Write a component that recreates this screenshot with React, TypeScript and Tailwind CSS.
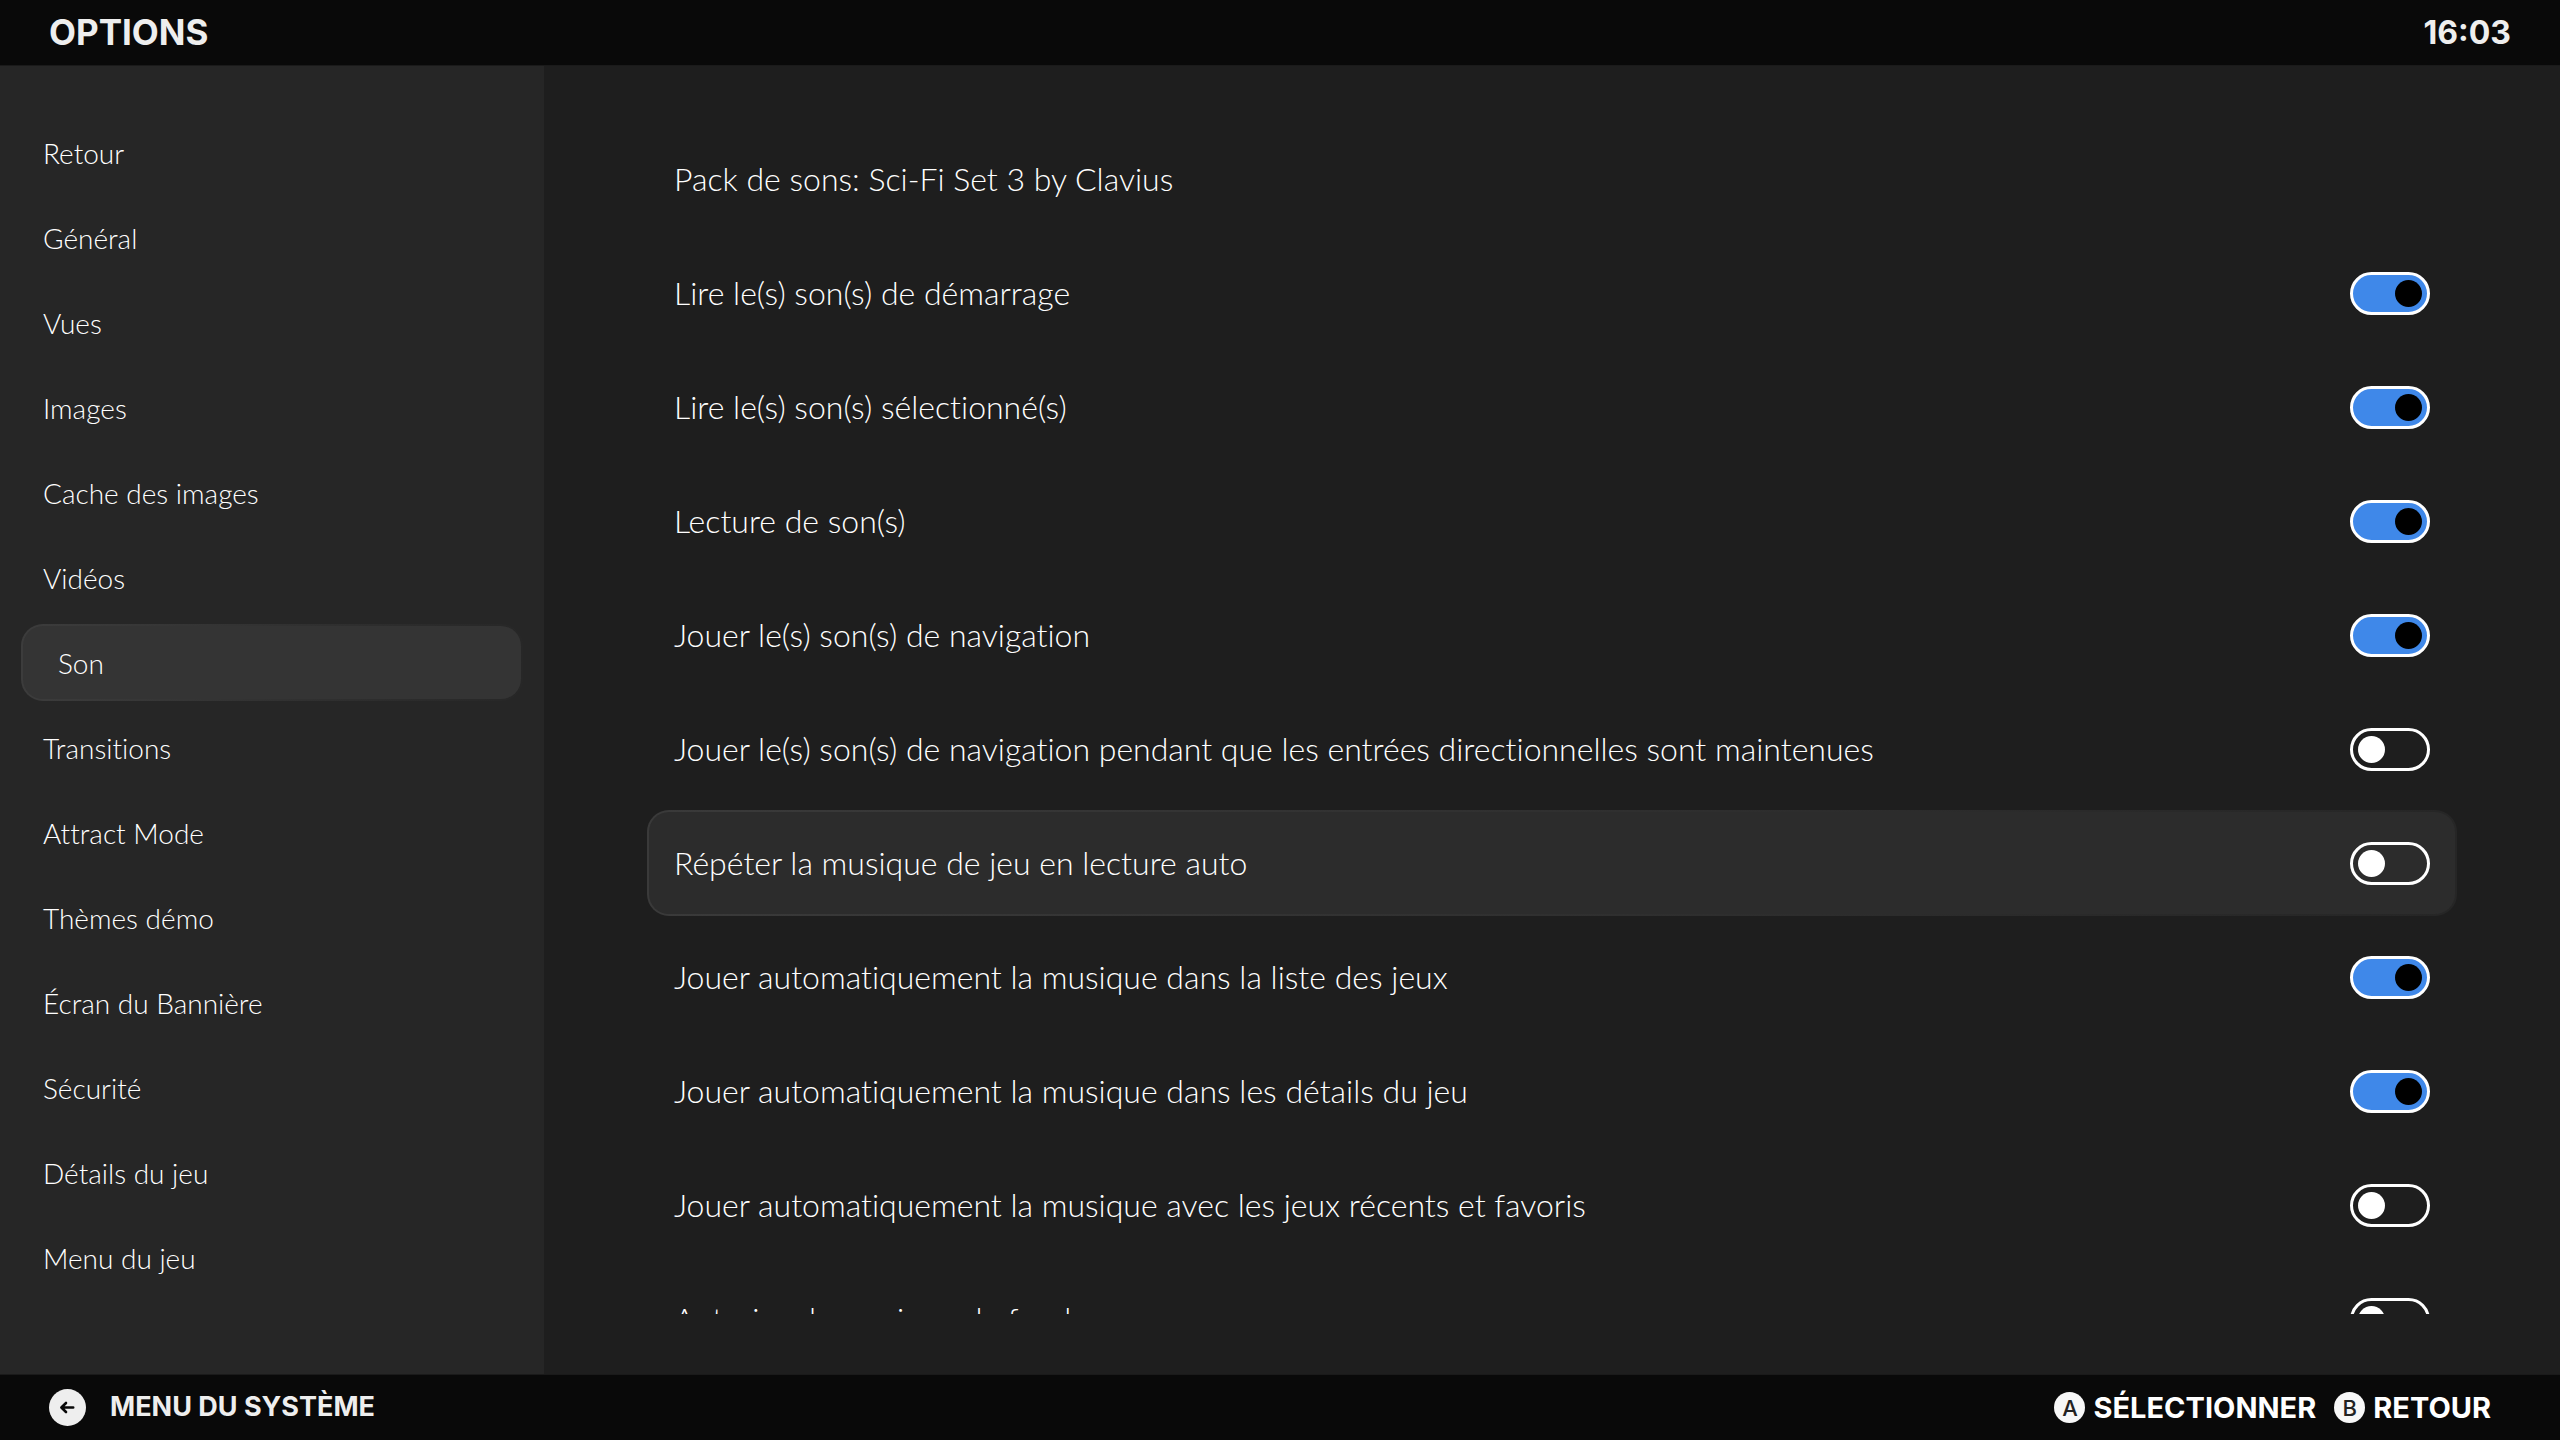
import React, { useState } from 'react';
import clsx from 'clsx';

const MENU = [
  'Retour',
  'Général',
  'Vues',
  'Images',
  'Cache des images',
  'Vidéos',
  'Son',
  'Transitions',
  'Attract Mode',
  'Thèmes démo',
  'Écran du Bannière',
  'Sécurité',
  'Détails du jeu',
  'Menu du jeu',
];

const SOUND_OPTIONS = [
  { label: 'Lire le(s) son(s) de démarrage', on: true },
  { label: 'Lire le(s) son(s) sélectionné(s)', on: true },
  { label: 'Lecture de son(s)', on: true },
  { label: 'Jouer le(s) son(s) de navigation', on: true },
  { label: 'Jouer le(s) son(s) de navigation pendant que les entrées directionnelles sont maintenues', on: false },
  { label: 'Répéter la musique de jeu en lecture auto', on: false },
  { label: 'Jouer automatiquement la musique dans la liste des jeux', on: true },
  { label: 'Jouer automatiquement la musique dans les détails du jeu', on: true },
  { label: 'Jouer automatiquement la musique avec les jeux récents et favoris', on: false },
  { label: 'Autoriser la musique de fond', on: false },
];

function Toggle({ checked, onChange }: { checked: boolean; onChange: () => void }) {
  return (
    <input
      type="checkbox"
      checked={checked}
      onChange={onChange}
      className="flex h-[43px] w-20 shrink-0 cursor-pointer appearance-none rounded-full border-3 border-white p-[5px] before:size-[27px] before:rounded-full before:bg-white checked:bg-[#3f88e9] checked:before:ml-auto checked:before:bg-black"
    />
  );
}

function Hint({ letter, text }: { letter: string; text: string }) {
  return (
    <button type="button" className="flex cursor-pointer items-center gap-2 text-[29px] font-bold text-white">
      <span className="flex size-[31px] items-center justify-center rounded-full bg-[#f7f7f7] text-[22px] leading-none font-medium text-[#222]">
        {letter}
      </span>
      <span>{text}</span>
    </button>
  );
}

export default function App() {
  const [section, setSection] = useState('Son');
  const [focused, setFocused] = useState('Répéter la musique de jeu en lecture auto');
  const [options, setOptions] = useState(SOUND_OPTIONS);

  const toggle = (label: string) => {
    setFocused(label);
    setOptions(options.map((o) => (o.label === label ? { ...o, on: !o.on } : o)));
  };

  return (
    <div className="flex h-screen flex-col overflow-hidden bg-[#1e1e1e] font-['Lato',sans-serif] font-light text-white">
      {/* Top bar */}
      <header className="flex h-[66px] shrink-0 items-center justify-between border-b border-[#1a1a1a] bg-[#090909] px-[49px] font-['Inter',sans-serif] font-bold text-[#eee]">
        <h1 className="text-[35px]">OPTIONS</h1>
        <time className="text-[32px]">16:03</time>
      </header>

      <div className="flex min-h-0 flex-1">
        {/* Sections */}
        <nav className="flex w-[544px] shrink-0 flex-col gap-2 bg-[#262626] px-[21px] pt-12 text-[28px]">
          {MENU.map((item) => {
            const active = item === section;
            return (
              <div
                key={item}
                className={clsx('h-[77px] shrink-0 rounded-[22px] p-[2px]', active && 'bg-linear-to-r from-[#3c3c3c] to-[#272727]')}
              >
                <button
                  type="button"
                  onClick={() => setSection(item)}
                  className={clsx(
                    'h-full w-full cursor-pointer rounded-[20px] text-left [font-variant-ligatures:none]',
                    active ? 'bg-[#343434] pl-[35px]' : 'pl-5'
                  )}
                >
                  {item}
                </button>
              </div>
            );
          })}
        </nav>

        {/* Sound settings */}
        <main className="flex min-w-0 flex-1 flex-col px-[103px] py-[60px] text-[32px] [font-variant-ligatures:none]">
          <div className="flex min-h-0 flex-1 flex-col gap-2 overflow-hidden">
            <button type="button" className="h-[106px] shrink-0 cursor-pointer pl-[27px] text-left">
              Pack de sons: Sci-Fi Set 3 by Clavius
            </button>
            {options.map(({ label, on }) => {
              const active = label === focused;
              return (
                <div
                  key={label}
                  className={clsx('h-[106px] shrink-0 rounded-[22px] p-[2px]', active && 'bg-linear-to-r from-[#3a3a3a] to-[#262626]')}
                >
                  <label
                    className={clsx(
                      'flex h-full cursor-pointer items-center justify-between rounded-[20px] px-[25px]',
                      active && 'bg-[#2c2c2c]'
                    )}
                  >
                    <span>{label}</span>
                    <Toggle checked={on} onChange={() => toggle(label)} />
                  </label>
                </div>
              );
            })}
          </div>
        </main>
      </div>

      {/* Bottom bar */}
      <footer className="flex h-[66px] shrink-0 items-center justify-between border-t border-[#1a1a1a] bg-[#090909] pr-[69px] pl-[49px] font-['Inter',sans-serif]">
        <button type="button" className="flex cursor-pointer items-center gap-6 text-[27px] font-bold text-[#eee]">
          <svg viewBox="0 0 37 37" className="size-[37px]" fill="none">
            <circle cx="18.5" cy="18.5" r="18.5" fill="#eee" />
            <path
              d="M24.2 18.5H13M17 14L12.4 18.5L17 23"
              stroke="#090909"
              strokeWidth="2.6"
              strokeLinecap="round"
              strokeLinejoin="round"
            />
          </svg>
          <span>MENU DU SYSTÈME</span>
        </button>
        <div className="flex items-center gap-[18px]">
          <Hint letter="A" text="SÉLECTIONNER" />
          <Hint letter="B" text="RETOUR" />
        </div>
      </footer>
    </div>
  );
}
